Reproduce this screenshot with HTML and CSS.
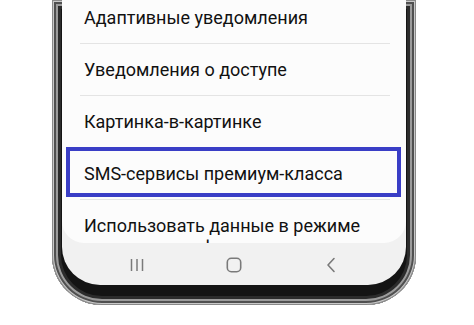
FILE: index.html
```html
<!DOCTYPE html>
<html lang="ru">
<head>
<meta charset="utf-8">
<link rel="stylesheet" href="styles.css">
</head>
<body>
<div class="phone">
  <div class="screen">
    <div class="card">
      <ul class="list">
        <li class="row">Адаптивные уведомления</li>
        <li class="row">Уведомления о доступе</li>
        <li class="row">Картинка-в-картинке</li>
        <li class="row row-selected">SMS-сервисы премиум-класса<span class="highlight"></span></li>
        <li class="row">Использовать данные в режиме экономии трафика</li>
      </ul>
    </div>
    <nav class="nav">
      <svg class="nav-icon" width="20" height="16" viewBox="0 0 20 16"><path d="M4.5 2v12M10 2v12M15.5 2v12" stroke="#7a7a7a" stroke-width="1.5" fill="none"/></svg>
      <svg class="nav-icon" width="20" height="16" viewBox="0 0 20 16"><rect x="3.3" y="1.3" width="13.4" height="13.4" rx="4" stroke="#7a7a7a" stroke-width="1.6" fill="none"/></svg>
      <svg class="nav-icon" width="20" height="16" viewBox="0 0 20 16"><path d="M13 1.5L7 8l6 6.5" stroke="#7a7a7a" stroke-width="1.6" fill="none" stroke-linecap="round" stroke-linejoin="round"/></svg>
    </nav>
  </div>
</div>
</body>
</html>
```

FILE: styles.css
```css
html, body {
  margin: 0;
  padding: 0;
  background: #ffffff;
}
body {
  width: 474px;
  height: 325px;
  overflow: hidden;
  font-family: Roboto, "Noto Sans", "Liberation Sans", sans-serif;
}
.phone {
  margin-left: 52px;
  width: 364px;
  height: 305px;
  box-sizing: border-box;
  padding: 0 10px 20px 10px;
  border-radius: 0 0 50px 50px;
  background: #141414;
  box-shadow:
    inset 0 0 0 1px #8a8a8a,
    inset 0 0 0 2px #c9c9c9,
    inset 0 0 0 4px #505050,
    inset 0 0 0 6px #9c9c9c,
    inset 0 0 0 9px #2c2c2c;
}
.screen {
  height: 285px;
  background: #f1f1f1;
  border-radius: 0 0 38px 38px;
  overflow: hidden;
  display: flex;
  flex-direction: column;
}
.card {
  height: 243px;
  flex: none;
  background: #fcfcfc;
  border-radius: 0 0 22px 22px;
  overflow: hidden;
}
.list {
  list-style: none;
  margin: -9px 0 0 0;
  padding: 0;
}
.row {
  position: relative;
  padding: 16px 22px 15px;
  font-size: 18px;
  line-height: 21px;
  color: #111111;
}
.row + .row::before {
  content: "";
  position: absolute;
  top: 0;
  left: 18px;
  right: 16px;
  height: 1px;
  background: #e4e4e4;
}
.highlight {
  position: absolute;
  top: 0;
  left: 4px;
  right: 5px;
  height: 50px;
  box-sizing: border-box;
  border: 4px solid #3a3ec6;
}
.nav {
  flex: 1;
  display: flex;
  justify-content: center;
  align-items: center;
  gap: 77px;
  padding-top: 1px;
}
.nav-icon {
  display: block;
}
```
